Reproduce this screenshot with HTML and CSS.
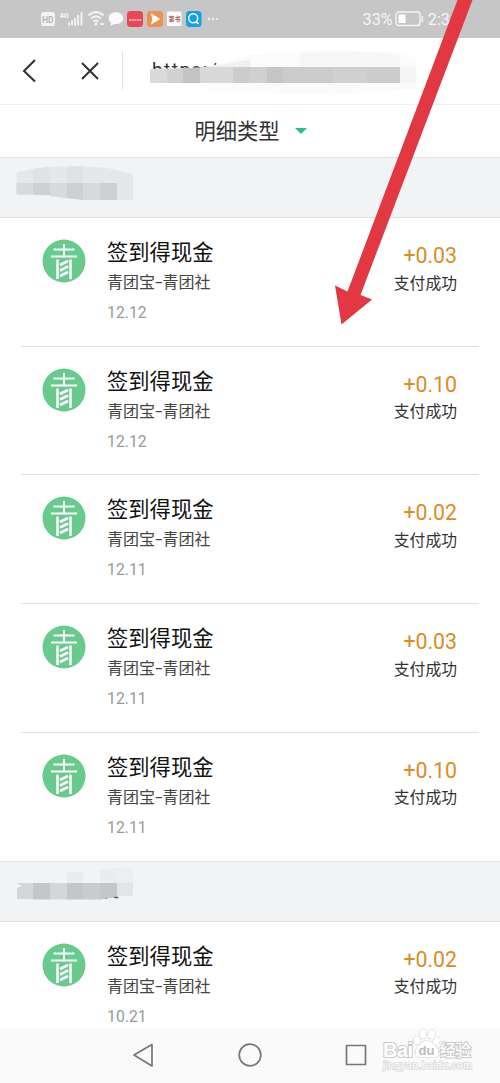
FILE: index.html
```
<!DOCTYPE html>
<html lang="zh-CN">
<head>
<meta charset="utf-8">
<title>明细类型</title>
<link rel="stylesheet" href="styles.css">
</head>
<body>
<svg class="defs" width="0" height="0">
  <symbol id="qing" viewBox="0 0 44 44">
    <circle cx="22" cy="22" r="21.5" fill="#68ca8c"/>
    <g fill="none" stroke="#fff">
      <path d="M11.500 10.500H32.500M9 17.500H35M22 5V18" stroke-width="2"/>
      <path d="M15.500 20.500V40M28.500 20.500V40" stroke-width="2.500"/>
      <path d="M18 26L26 22M18 31.500L26 27.500M18 37L26 33" stroke-width="2.600"/>
    </g>
  </symbol>
</svg>
<div class="screen">
  <header class="status">
    <svg class="status-icons" width="182" height="20" viewBox="40 9 182 20">
      <rect x="41" y="12" width="14" height="14" rx="3" fill="#f4f4f4"/>
      <text x="42" y="22.500" class="hd">HD</text>
      <text x="59.500" y="17.500" class="net">4G</text>
      <path d="M69 25.500V22.500M72 25.500V20.500M75 25.500V18M78 25.500V15M81.500 25.500V12" stroke="#f4f4f4" stroke-width="1.800"/>
      <path d="M88.500 15.500Q96 8.500 103.500 15.500M91 18.500Q96 14 101 18.500M93.500 21.500Q96 19.500 98.500 21.500" fill="none" stroke="#f4f4f4" stroke-width="1.800"/>
      <circle cx="96" cy="24" r="1.600" fill="#f4f4f4"/>
      <path d="M100 24H104" stroke="#eee" stroke-width="2"/>
      <path d="M116 12.300C120.500 12.300 123.200 15 123.200 18.300C123.200 22.500 119 24.500 114.500 24L110.500 25.800L111 22.500C106.500 19 108.500 12.300 116 12.300Z" fill="#fbfbfb"/>
      <rect x="127" y="11" width="16" height="16" rx="3.500" fill="#e94555"/>
      <path d="M129 20H141" stroke="#fbd0d3" stroke-width="1.500" stroke-dasharray="2 .6"/>
      <rect x="147" y="11" width="16" height="16" rx="3.500" fill="#ee914e"/>
      <path d="M151.500 14L159.500 19L151.500 23.800L153 19Z" fill="#fff" stroke="#fff" stroke-linejoin="round"/>
      <rect x="167" y="11.500" width="14.500" height="14.500" rx="1" fill="#fdfaf7"/>
      <text x="168.500" y="21" class="tiny">第书</text>
      <rect x="186" y="11" width="15.500" height="16" rx="3.500" fill="#159fe6"/>
      <circle cx="193.200" cy="18.300" r="4.500" fill="none" stroke="#fff" stroke-width="1.500"/>
      <path d="M196.300 21.500L198.500 24" stroke="#fff" stroke-width="1.500"/>
      <g fill="#f1f1f1"><circle cx="209" cy="19" r="1.200"/><circle cx="213" cy="19" r="1.200"/><circle cx="217" cy="19" r="1"/></g>
    </svg>
    <div class="status-right">
      <span>33%</span>
      <svg width="29" height="16" viewBox="0 0 29 16">
        <rect x="1" y="1" width="24" height="13.500" rx="2.500" fill="none" stroke="#f4f4f4" stroke-width="1.400"/>
        <rect x="3.500" y="3.500" width="7" height="8.500" fill="#fff"/>
        <path d="M27.300 5V11" stroke="#f4f4f4" stroke-width="1.500"/>
      </svg>
      <span class="clock">2:3</span>
    </div>
  </header>
  <nav class="browser">
    <svg width="125" height="66" viewBox="0 0 125 66">
      <g fill="none" stroke="#303030" stroke-width="2">
        <path d="M35 22L24 33L35 43.500M82 25L98 41M98 25L82 41"/>
        <path d="M122.500 13V52" stroke="#e3e3e3" stroke-width="1"/>
      </g>
    </svg>
    <div class="address">
      <span class="url">https://</span>
      <svg class="cover" width="300" height="58" viewBox="130 42 300 58">
        <path d="M208 67L250 55Q300 49 350 51L400 54L416 58V89L330 95L208 91Z" fill="#fbfbfb"/>
        <path d="M300 53Q350 49 400 54V67H300Z" fill="#f7f7f7"/>
        <path d="M150 69L200 67.500L215 66L250 60V83H150Z" fill="#dadada"/>
        <path d="M167 69H183V83H167Z" fill="#d2d2d2"/>
        <path d="M183 68H200V83H183Z" fill="#c4c4c4"/>
        <path d="M200 67H233V83H200Z" fill="#d8d8d8"/>
        <path d="M208 67L250 60V67Z" fill="#f0f0f0"/>
        <path d="M233 67H400V83H233Z" fill="#ccc"/>
        <path d="M250 67H267V83H250ZM333 67H367V83H333Z" fill="#d0d0d0"/>
        <path d="M267 67H283V83H267Z" fill="#c6c6c6"/>
        <path d="M400 67H416V83H400Z" fill="#f5f5f5"/>
      </svg>
    </div>
  </nav>
  <div class="filter"><span>明细类型</span><i class="caret"></i></div>
  <div class="band">
    <svg width="150" height="59" viewBox="0 158 150 59">
      <path d="M16.500 172L33 169Q50 166 67 166.500H90Q105 167 117 170L133 174V200H84L60 198L45 195H16.500Z" fill="#e6e7e8"/>
      <path d="M33 169L50 166.500V183H33ZM67 166.500H83V183H67Z" fill="#e1e2e3"/>
      <path d="M16.500 183H33V194.500H16.500Z" fill="#d9dadb"/>
      <path d="M33 183H50V195H33Z" fill="#cfd0d1"/>
      <path d="M50 183H67V198L50 196Z" fill="#d9dadb"/>
      <path d="M67 183H83V200L67 198ZM100 183H117V200H100Z" fill="#cecfd0"/>
      <path d="M83 183H100V200H83Z" fill="#d8d9da"/>
    </svg>
  </div>
  <main class="list">
    <article class="row"><svg class="logo"><use href="#qing"/></svg><div class="info"><h2>签到得现金</h2><p>青团宝<b>-</b>青团社</p><time>12.12</time></div><div class="pay"><strong>+0.03</strong><span>支付成功</span></div></article>
    <article class="row"><svg class="logo"><use href="#qing"/></svg><div class="info"><h2>签到得现金</h2><p>青团宝<b>-</b>青团社</p><time>12.12</time></div><div class="pay"><strong>+0.10</strong><span>支付成功</span></div></article>
    <article class="row"><svg class="logo"><use href="#qing"/></svg><div class="info"><h2>签到得现金</h2><p>青团宝<b>-</b>青团社</p><time>12.11</time></div><div class="pay"><strong>+0.02</strong><span>支付成功</span></div></article>
    <article class="row"><svg class="logo"><use href="#qing"/></svg><div class="info"><h2>签到得现金</h2><p>青团宝<b>-</b>青团社</p><time>12.11</time></div><div class="pay"><strong>+0.03</strong><span>支付成功</span></div></article>
    <article class="row last"><svg class="logo"><use href="#qing"/></svg><div class="info"><h2>签到得现金</h2><p>青团宝<b>-</b>青团社</p><time>12.11</time></div><div class="pay"><strong>+0.10</strong><span>支付成功</span></div></article>
  </main>
  <div class="band">
    <svg width="150" height="59" viewBox="0 862 150 59">
      <path d="M67 872H83V883H67ZM100 870L117 868V883H100Z" fill="#ebecee"/>
      <path d="M117 868L133 870V896H117Z" fill="#e3e4e5"/>
      <path d="M117 868L133 870V883H117Z" fill="#edeef0"/>
      <path d="M17 883L22 886L17 888V899H33V883Z" fill="#d5d6d7"/>
      <path d="M33 883H50V899.500H33Z" fill="#c5c6c7"/>
      <path d="M50 883H67V899.500H50Z" fill="#d5d6d7"/>
      <path d="M67 883H83V899.500H67Z" fill="#c5c6c7"/>
      <path d="M83 883H117V897L100 899.500H83Z" fill="#cacbcc"/>
      <path d="M100 883H117V897L100 899.500Z" fill="#c5c6c7"/>
      <path d="M114 897.500H118.500" stroke="#666" stroke-width="1.500"/>
      <path d="M105 898.500H107" stroke="#999" stroke-width="1"/>
    </svg>
  </div>
  <article class="row cut"><svg class="logo"><use href="#qing"/></svg><div class="info"><h2>签到得现金</h2><p>青团宝<b>-</b>青团社</p><time>10.21</time></div><div class="pay"><strong>+0.02</strong><span>支付成功</span></div></article>
  <footer class="keys">
    <svg width="500" height="55" viewBox="0 1028 500 55">
      <g fill="none" stroke="#777" stroke-width="1.700" stroke-linejoin="round">
        <path d="M134 1055L152 1044.500V1066Z"/>
        <circle cx="250" cy="1055" r="10.800"/>
        <rect x="346.500" y="1045.500" width="19" height="19"/>
      </g>
    </svg>
  </footer>
  <svg class="watermark" width="100" height="56" viewBox="380 1024 100 56">
    <g class="mark">
      <text x="383" y="1057" class="bai" textLength="30">Bai</text>
      <path d="M427 1041C421 1041 415 1048 415.500 1053C416 1058.500 422 1057.500 427 1057.500S438 1058.500 438.500 1053C439 1048 433 1041 427 1041Z"/>
      <ellipse cx="417" cy="1040.500" rx="3.300" ry="4.300" transform="rotate(-18 417 1040.500)"/>
      <ellipse cx="423" cy="1034" rx="3.500" ry="4.700"/>
      <ellipse cx="431.500" cy="1034.300" rx="3.300" ry="4.600" transform="rotate(12 431.500 1034.300)"/>
      <ellipse cx="436.500" cy="1041" rx="3.300" ry="4.200" transform="rotate(20 436.500 1041)"/>
      <text x="440" y="1056" class="jy" textLength="31">经验</text>
      <text x="383" y="1069" class="site" textLength="89">jingyan.baidu.com</text>
    </g>
    <text x="418.500" y="1054.500" class="du">du</text>
  </svg>
  <svg class="arrow" width="500" height="330" viewBox="0 0 500 330">
    <path d="M457.500 0H472.500L360.500 295L372 299.500L341.500 324.500L335 285.500L347.500 291.500Z" fill="#e13842"/>
  </svg>
</div>
</body>
</html>
```
FILE: styles.css
```
* { box-sizing: border-box; }
body { margin: 0; background: #fff; font-family: Roboto, "Noto Sans CJK SC", sans-serif; }
.defs { position: absolute; }
.screen { position: relative; width: 500px; height: 1083px; overflow: hidden; display: flex; flex-direction: column; background: #fff; }
.screen > * { flex-shrink: 0; }
.screen svg { display: block; }

.status { height: 37.500px; background: #c6c6c6; display: flex; justify-content: space-between; padding: 9px 50px 0 40px; color: #f6f6f6; }
.hd { font: 700 8.500px Roboto, sans-serif; fill: #b5b5b5; }
.net { font: 700 7.500px Roboto, sans-serif; fill: #f4f4f4; }
.tiny { font: 700 6px "Noto Sans CJK SC", sans-serif; fill: #a2625c; }
.status-right { display: flex; align-items: flex-start; font-size: 16.300px; line-height: 22px; }
.status-right svg { margin: 2px 4px 0 2px; }

.browser { height: 67px; display: flex; border-bottom: 1px solid #f0f0f0; }
.address { position: relative; padding: 20px 0 0 27px; }
.url { font-size: 19px; line-height: 24px; letter-spacing: 1.500px; color: #333; }
.cover { position: absolute; left: 5px; top: 4px; }

.filter { height: 52.300px; display: flex; justify-content: center; align-items: center; gap: 15px; padding: 2px 0 0 1px; font-size: 21.300px; color: #333; line-height: 30px; }
.caret { margin-bottom: 2px; border: 6px solid transparent; border-top: 6px solid #2cc084; border-bottom: 0; }

.band { height: 61.300px; background: #f2f3f5; border-top: 1px solid #e0e2e3; border-bottom: 1px solid #e0e2e3; }

.row { height: 128.700px; margin: 0 21px; padding: 20px 22px 0 21px; display: flex; border-bottom: 1px solid #e2e2e2; }
.row.last { height: 127.700px; border-bottom: 0; }
.row.cut { height: 106px; border-bottom: 0; overflow: hidden; }
.logo { width: 44px; height: 44px; margin-top: 1px; }
.info { margin-left: 21px; padding-top: 1px; flex: 1; white-space: nowrap; }
.info h2 { margin: 0; font-size: 21.300px; line-height: 28px; font-weight: 400; color: #111; }
.info p { margin: 4px 0 0; font-size: 16px; line-height: 24px; color: #444; }
.info b { display: inline-block; width: 7.500px; text-align: center; font-weight: 400; transform: scaleX(1.600); }
.info time { display: block; margin-top: 7px; font-size: 15.800px; line-height: 22px; color: #999; }
.pay { display: flex; flex-direction: column; align-items: flex-end; }
.pay strong { margin-top: 4px; font-size: 21.300px; line-height: 28px; font-weight: 400; color: #dc8c22; }
.pay span { font-size: 15.800px; line-height: 24px; margin-top: 1.500px; color: #333; }

.keys { flex: 1 0 auto; background: #fafafa; height: 55px; }
.watermark { position: absolute; left: 380px; top: 1024px; }
.mark { fill: #fff; stroke: #c9c9c9; stroke-width: 1px; paint-order: stroke; }
.bai { font: 700 20px "Liberation Sans", sans-serif; stroke-width: 2px; }
.jy { font: 500 16px "Noto Sans CJK SC", sans-serif; stroke-width: 2px; }
.site { font: 400 10.500px "Liberation Sans", sans-serif; stroke: #d8d8d8; stroke-width: 1.500px; }
.du { font: 700 13px "Liberation Sans", sans-serif; fill: #bbb; }
.arrow { position: absolute; left: 0; top: 0; }
```
